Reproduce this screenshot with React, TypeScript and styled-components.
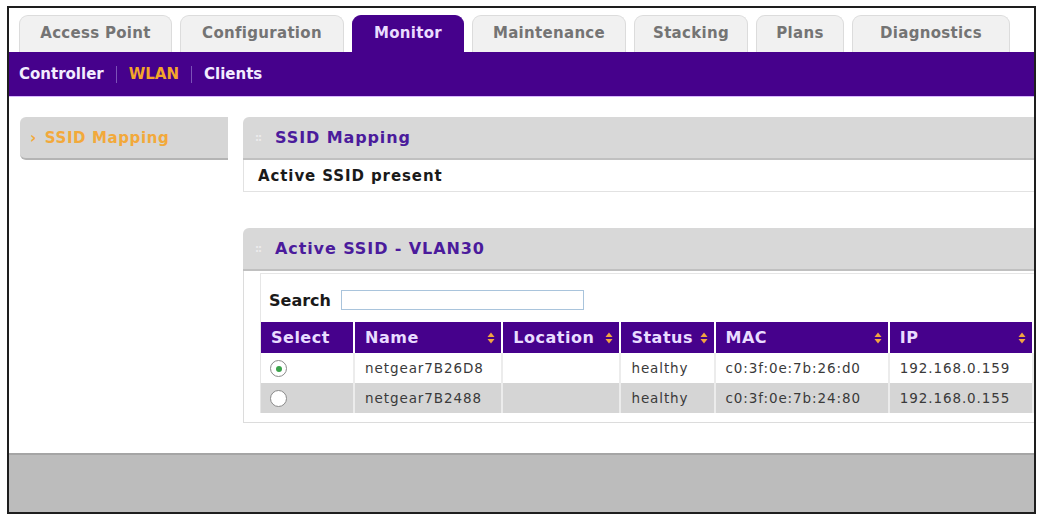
import React, { useState } from "react";
import styled, { createGlobalStyle } from "styled-components";

const GlobalStyle = createGlobalStyle`
  body {
    margin: 0;
    background: #ffffff;
    font-family: "DejaVu Sans", Verdana, sans-serif;
  }
`;

const PURPLE = "#46018c";

const Frame = styled.div`
  margin: 6px 0 0 7px;
  width: 1025px;
  height: 504px;
  border: 2px solid #1e1e1e;
  display: flex;
  flex-direction: column;
  overflow: hidden;
  background: #fff;
`;

const TabRow = styled.div`
  display: flex;
  gap: 8px;
  padding: 7px 0 0 10px;
  height: 37px;
  align-items: flex-end;
`;

const Tab = styled.div<{ $active?: boolean; $w: number }>`
  width: ${(p) => p.$w}px;
  height: 37px;
  box-sizing: border-box;
  border-radius: 9px 9px 0 0;
  border: 1px solid ${(p) => (p.$active ? PURPLE : "#dcdcdc")};
  border-bottom: none;
  background: ${(p) => (p.$active ? PURPLE : "#f1f1f1")};
  color: ${(p) => (p.$active ? "#eadcff" : "#747474")};
  font-size: 15px;
  font-weight: 700;
  letter-spacing: 0.3px;
  display: flex;
  align-items: center;
  justify-content: center;
  padding-bottom: 2px;
`;

const SubNav = styled.div`
  height: 44px;
  background: ${PURPLE};
  border-bottom: 1px solid #d9b8ff;
  display: flex;
  align-items: center;
  padding-left: 10px;
  gap: 12px;
  font-size: 15px;
  font-weight: 700;
`;

const SubLink = styled.span<{ $active?: boolean }>`
  color: ${(p) => (p.$active ? "#f4a62a" : "#f3ecff")};
`;

const Sep = styled.span`
  width: 1px;
  height: 17px;
  background: #7c52b8;
`;

const Content = styled.div`
  flex: 1;
  display: flex;
  gap: 15px;
  padding: 20px 0 0 11px;
`;

const SideButton = styled.div`
  width: 208px;
  height: 43px;
  box-sizing: border-box;
  background: #d6d6d6;
  border-radius: 6px 0 0 6px;
  border-bottom: 2px solid #b4b4b4;
  display: flex;
  align-items: center;
  padding-left: 10px;
  gap: 8px;
  color: #f2a93b;
  font-size: 15px;
  font-weight: 700;
  letter-spacing: 0.6px;
`;

const Main = styled.div`
  flex: 1;
  display: flex;
  flex-direction: column;
  gap: 36px;
`;

const Panel = styled.div``;

const PanelHead = styled.div`
  height: 43px;
  box-sizing: border-box;
  background: #d8d8d8;
  border-radius: 6px 0 0 0;
  border-bottom: 2px solid #c0c0c0;
  display: flex;
  align-items: center;
  padding-left: 12px;
  gap: 14px;
  color: #4b1b9c;
  font-size: 16px;
  font-weight: 700;
  letter-spacing: 0.9px;
`;

const Grip = styled.span`
  color: #ececec;
  font-size: 10px;
  letter-spacing: -1px;
`;

const PanelRow = styled.div`
  height: 32px;
  box-sizing: border-box;
  border-left: 1px solid #e2e2e2;
  border-bottom: 1px solid #e2e2e2;
  display: flex;
  align-items: center;
  padding-left: 14px;
  font-size: 15px;
  font-weight: 700;
  letter-spacing: 0.9px;
  color: #1a1a1a;
`;

const PanelBody = styled.div`
  height: 152px;
  box-sizing: border-box;
  border-left: 1px solid #dcdcdc;
  border-bottom: 1px solid #dcdcdc;
  padding: 2px 0 0 16px;
`;

const Inner = styled.div`
  border-left: 1px solid #e6e6e6;
  border-top: 1px solid #e6e6e6;
  padding-top: 16px;
`;

const SearchRow = styled.div`
  display: flex;
  align-items: center;
  gap: 10px;
  padding-left: 8px;
  margin-bottom: 12px;
  font-size: 16px;
  font-weight: 700;
  color: #1a1a1a;
`;

const SearchInput = styled.input`
  width: 243px;
  height: 20px;
  box-sizing: border-box;
  border: 1px solid #a9c4dc;
  outline: none;
`;

const Table = styled.table`
  border-collapse: collapse;
  width: 773px;
  font-size: 13.5px;
`;

const Th = styled.th<{ $w: number }>`
  width: ${(p) => p.$w}px;
  height: 31px;
  background: ${PURPLE};
  color: #e9dcff;
  font-size: 16px;
  font-weight: 700;
  letter-spacing: 0.5px;
  text-align: left;
  padding: 0 6px 0 10px;
  border-right: 2px solid #fff;
  box-sizing: border-box;
`;

const ThInner = styled.div`
  display: flex;
  align-items: center;
  justify-content: space-between;
  gap: 4px;
`;

const Tr = styled.tr<{ $alt?: boolean }>`
  background: ${(p) => (p.$alt ? "#d5d5d5" : "#fff")};
`;

const Td = styled.td`
  height: 30px;
  padding: 0 10px;
  color: #3a3a3a;
  letter-spacing: 0.9px;
  border-right: 2px solid #ececec;
  box-sizing: border-box;
  white-space: nowrap;
`;

const Radio = styled.span<{ $on?: boolean }>`
  display: inline-flex;
  width: 15px;
  height: 15px;
  border-radius: 50%;
  border: 1.5px solid #8a8a8a;
  background: #fff;
  align-items: center;
  justify-content: center;
  margin-left: -1px;
  &::after {
    content: "";
    width: 6px;
    height: 6px;
    border-radius: 50%;
    background: ${(p) => (p.$on ? "#3aa24a" : "transparent")};
  }
`;

const Footer = styled.div`
  height: 57px;
  background: #bcbcbc;
  border-top: 2px solid #a5a5a5;
`;

const SortIcon = () => (
  <svg width="8" height="12" viewBox="0 0 8 12">
    <path d="M4 0.5 L7.5 5 L0.5 5 Z" fill="#f2a541" />
    <path d="M4 11.5 L7.5 7 L0.5 7 Z" fill="#f2a541" />
  </svg>
);

const tabs = [
  { label: "Access Point", w: 153 },
  { label: "Configuration", w: 164 },
  { label: "Monitor", w: 112, active: true },
  { label: "Maintenance", w: 154 },
  { label: "Stacking", w: 114 },
  { label: "Plans", w: 88 },
  { label: "Diagnostics", w: 158 },
];

const columns = [
  { label: "Select", w: 93, sort: false },
  { label: "Name", w: 148, sort: true },
  { label: "Location", w: 118, sort: true },
  { label: "Status", w: 94, sort: true },
  { label: "MAC", w: 174, sort: true },
  { label: "IP", w: 144, sort: true },
];

const rows = [
  { name: "netgear7B26D8", status: "healthy", mac: "c0:3f:0e:7b:26:d0", ip: "192.168.0.159" },
  { name: "netgear7B2488", status: "healthy", mac: "c0:3f:0e:7b:24:80", ip: "192.168.0.155" },
];

const App: React.FC = () => {
  const [selected, setSelected] = useState(0);

  return (
    <>
      <GlobalStyle />
      <Frame>
        <TabRow>
          {tabs.map((t) => (
            <Tab key={t.label} $w={t.w} $active={t.active}>
              {t.label}
            </Tab>
          ))}
        </TabRow>
        <SubNav>
          <SubLink>Controller</SubLink>
          <Sep />
          <SubLink $active>WLAN</SubLink>
          <Sep />
          <SubLink>Clients</SubLink>
        </SubNav>

        <Content>
          <SideButton>
            <span>›</span>
            SSID Mapping
          </SideButton>

          <Main>
            <Panel>
              <PanelHead>
                <Grip>::</Grip>
                SSID Mapping
              </PanelHead>
              <PanelRow>Active SSID present</PanelRow>
            </Panel>

            <Panel>
              <PanelHead>
                <Grip>::</Grip>
                Active SSID - VLAN30
              </PanelHead>
              <PanelBody>
                <Inner>
                  <SearchRow>
                    Search
                    <SearchInput />
                  </SearchRow>
                  <Table>
                    <thead>
                      <tr>
                        {columns.map((c) => (
                          <Th key={c.label} $w={c.w}>
                            <ThInner>
                              {c.label}
                              {c.sort && <SortIcon />}
                            </ThInner>
                          </Th>
                        ))}
                      </tr>
                    </thead>
                    <tbody>
                      {rows.map((r, i) => (
                        <Tr key={r.name} $alt={i % 2 === 1} onClick={() => setSelected(i)}>
                          <Td>
                            <Radio $on={selected === i} />
                          </Td>
                          <Td>{r.name}</Td>
                          <Td></Td>
                          <Td>{r.status}</Td>
                          <Td>{r.mac}</Td>
                          <Td>{r.ip}</Td>
                        </Tr>
                      ))}
                    </tbody>
                  </Table>
                </Inner>
              </PanelBody>
            </Panel>
          </Main>
        </Content>

        <Footer />
      </Frame>
    </>
  );
};

export default App;
